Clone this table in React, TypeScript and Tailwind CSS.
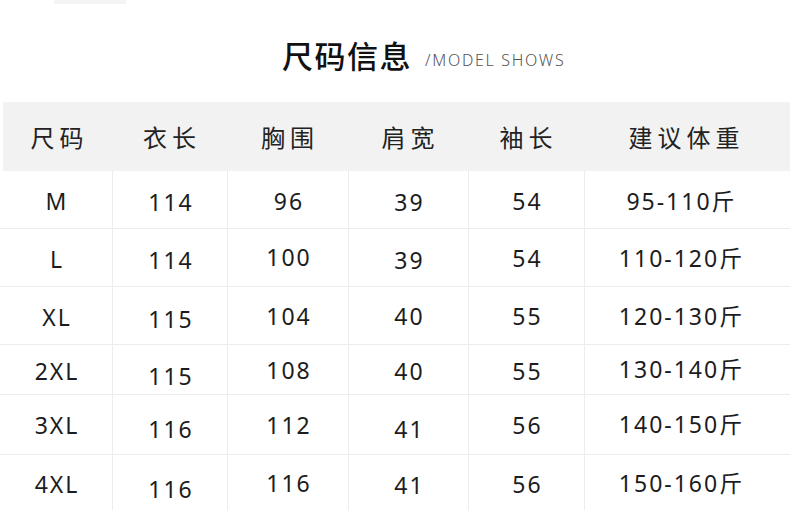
const font = "font-['Noto_Sans','Noto_Sans_CJK_SC',sans-serif]";

const heads = ['尺码', '衣长', '胸围', '肩宽', '袖长', '建议体重'];

type Row = { h: string; cells: string[]; dy: string[] };

const rows: Row[] = [
  {
    h: 'h-[58px]',
    cells: ['M', '114', '96', '39', '54', '95-110斤'],
    dy: ['translate-y-[2px]', 'translate-y-[3px]', 'translate-y-[2px]', 'translate-y-[3px]', 'translate-y-[2px]', 'translate-y-[2px]'],
  },
  {
    h: 'h-[58px]',
    cells: ['L', '114', '100', '39', '54', '110-120斤'],
    dy: ['translate-y-[2px]', 'translate-y-[3px]', 'translate-y-[0px]', 'translate-y-[3px]', 'translate-y-[1px]', 'translate-y-[1px]'],
  },
  {
    h: 'h-[58px]',
    cells: ['XL', '115', '104', '40', '55', '120-130斤'],
    dy: ['translate-y-[2px]', 'translate-y-[4px]', 'translate-y-[1px]', 'translate-y-[1px]', 'translate-y-[1px]', 'translate-y-[1px]'],
  },
  {
    h: 'h-[50px]',
    cells: ['2XL', '115', '108', '40', '55', '130-140斤'],
    dy: ['translate-y-[2px]', 'translate-y-[7px]', 'translate-y-[1px]', 'translate-y-[2px]', 'translate-y-[2px]', 'translate-y-[0px]'],
  },
  {
    h: 'h-[60px]',
    cells: ['3XL', '116', '112', '41', '56', '140-150斤'],
    dy: ['translate-y-[1px]', 'translate-y-[5px]', 'translate-y-[1px]', 'translate-y-[5px]', 'translate-y-[1px]', 'translate-y-[0px]'],
  },
  {
    h: 'h-[58px]',
    cells: ['4XL', '116', '116', '41', '56', '150-160斤'],
    dy: ['translate-y-[1px]', 'translate-y-[6px]', 'translate-y-[0px]', 'translate-y-[2px]', 'translate-y-[1px]', 'translate-y-[0px]'],
  },
];

export default function App() {
  return (
    <div className={`w-[790px] h-[510px] overflow-hidden bg-white text-[#1c1c1c] ${font}`}>
      {/* title */}
      <div className="h-[102px]">
        <div className="ml-[54px] w-[72px] h-[4px] bg-[#f4f4f4]"></div>
        <div className="flex items-end pl-[282px] pt-[34px]">
          <span className="text-[31px] leading-[36px] font-medium tracking-[1.5px] text-[#111]">尺码信息</span>
          <span className="ml-[13px] mb-[4px] text-[16px] leading-[20px] font-light tracking-[1.7px] text-[#555]">/MODEL SHOWS</span>
        </div>
      </div>

      {/* header band */}
      <div className="ml-[3px] h-[69px] bg-[#f2f2f2] grid grid-cols-[110px_115px_121px_120px_116px_1fr] items-center">
        {heads.map((t, i) => (
          <div
            key={t}
            className={`text-center text-[24px] tracking-[5px] text-[#222] translate-y-[1px] ${i === 5 ? 'pr-[2px]' : 'pl-[3px]'}`}
          >
            {t}
          </div>
        ))}
      </div>

      {/* rows */}
      {rows.map((r) => (
        <div key={r.cells[0]} className={`grid grid-cols-[113px_115px_121px_120px_116px_1fr] border-b border-[#ececec] ${r.h}`}>
          {r.cells.map((c, i) => (
            <div
              key={i}
              className={`flex items-center justify-center ${i < 5 ? 'border-r border-[#ececec]' : 'pr-[14px]'}`}
            >
              <span className={`text-[23px] tracking-[2px] pl-[2px] ${r.dy[i]}`}>{c}</span>
            </div>
          ))}
        </div>
      ))}
    </div>
  );
}
